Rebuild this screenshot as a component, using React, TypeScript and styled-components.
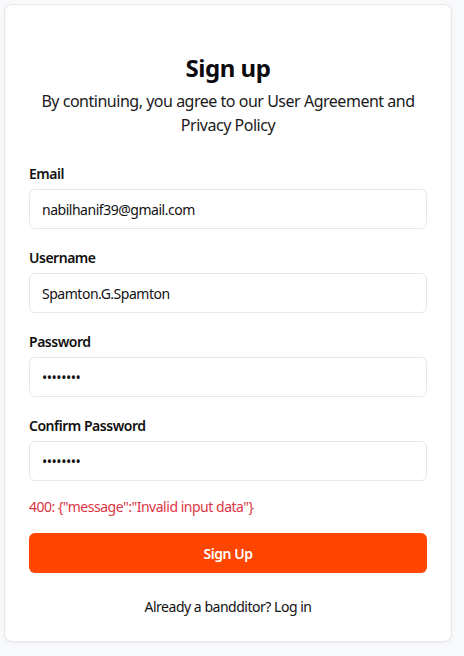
import React, { useState } from 'react';
import styled, { createGlobalStyle } from 'styled-components';

const GlobalStyle = createGlobalStyle`
	* {
		box-sizing: border-box;
	}

	body {
		margin: 0;
		padding: 4px;
		background: #f8f9fb;
		font-family: 'Noto Sans', 'Open Sans', sans-serif;
		letter-spacing: -0.03em;
		color: #111827;
	}
`;

export default function App() {
	const [email, setEmail] = useState('nabilhanif39@gmail.com');
	const [username, setUsername] = useState('Spamton.G.Spamton');
	const [password, setPassword] = useState('12345678');
	const [confirm, setConfirm] = useState('12345678');

	return (
		<>
			<GlobalStyle />
			<Card>
				<Title>Sign up</Title>
				<Subtitle>By continuing, you agree to our User Agreement and Privacy Policy</Subtitle>
				<Form onSubmit={(e) => e.preventDefault()}>
					<Field>
						<Label htmlFor="email">Email</Label>
						<Input id="email" type="email" value={email} onChange={(e) => setEmail(e.target.value)} />
					</Field>
					<Field>
						<Label htmlFor="username">Username</Label>
						<Input id="username" value={username} onChange={(e) => setUsername(e.target.value)} />
					</Field>
					<Field>
						<Label htmlFor="password">Password</Label>
						<Input
							id="password"
							type="password"
							value={password}
							onChange={(e) => setPassword(e.target.value)}
						/>
					</Field>
					<Field>
						<Label htmlFor="confirm">Confirm Password</Label>
						<Input
							id="confirm"
							type="password"
							value={confirm}
							onChange={(e) => setConfirm(e.target.value)}
						/>
					</Field>
					<ErrorText>400: {'{"message":"Invalid input data"}'}</ErrorText>
					<SubmitButton type="submit">Sign Up</SubmitButton>
				</Form>
				<Footer>Already a bandditor? Log in</Footer>
			</Card>
		</>
	);
}

const Card = styled.div`
	width: 448px;
	background: #fff;
	border: 1px solid #e5e7eb;
	border-radius: 8px;
	box-shadow: 0 1px 2px rgba(0, 0, 0, 0.05);
	padding: 47px 24px 24px;
	display: flex;
	flex-direction: column;
`;

const Title = styled.h1`
	margin: 0;
	font-size: 24px;
	line-height: 32px;
	font-weight: 700;
	text-align: center;
	color: #0b0b0f;
`;

const Subtitle = styled.p`
	margin: 5px 0 0;
	font-size: 16px;
	line-height: 24px;
	text-align: center;
	color: #1a1a1a;
`;

const Form = styled.form`
	margin-top: 27px;
	display: flex;
	flex-direction: column;
	gap: 19px;
`;

const Field = styled.div`
	display: flex;
	flex-direction: column;
	gap: 5px;
`;

const Label = styled.label`
	font-size: 14px;
	line-height: 20px;
	font-weight: 600;
	color: #111;
`;

const Input = styled.input`
	height: 40px;
	padding: 0 12px;
	border: 1px solid #e5e7eb;
	border-radius: 6px;
	font-family: inherit;
	font-size: 14px;
	letter-spacing: inherit;
	color: #111;
	background: #fff;
	outline: none;

	&:focus {
		border-color: #ff4500;
	}
`;

const ErrorText = styled.p`
	margin: -3px 0 0;
	font-size: 14px;
	line-height: 20px;
	color: #dc3545;
`;

const SubmitButton = styled.button`
	height: 40px;
	margin-top: -3px;
	border: none;
	border-radius: 6px;
	background: #ff4500;
	color: #fff;
	font-family: inherit;
	font-size: 14px;
	font-weight: 600;
	letter-spacing: inherit;
	cursor: pointer;
`;

const Footer = styled.p`
	margin: 24px 0 0;
	font-size: 14px;
	line-height: 20px;
	text-align: center;
	color: #111;
`;
